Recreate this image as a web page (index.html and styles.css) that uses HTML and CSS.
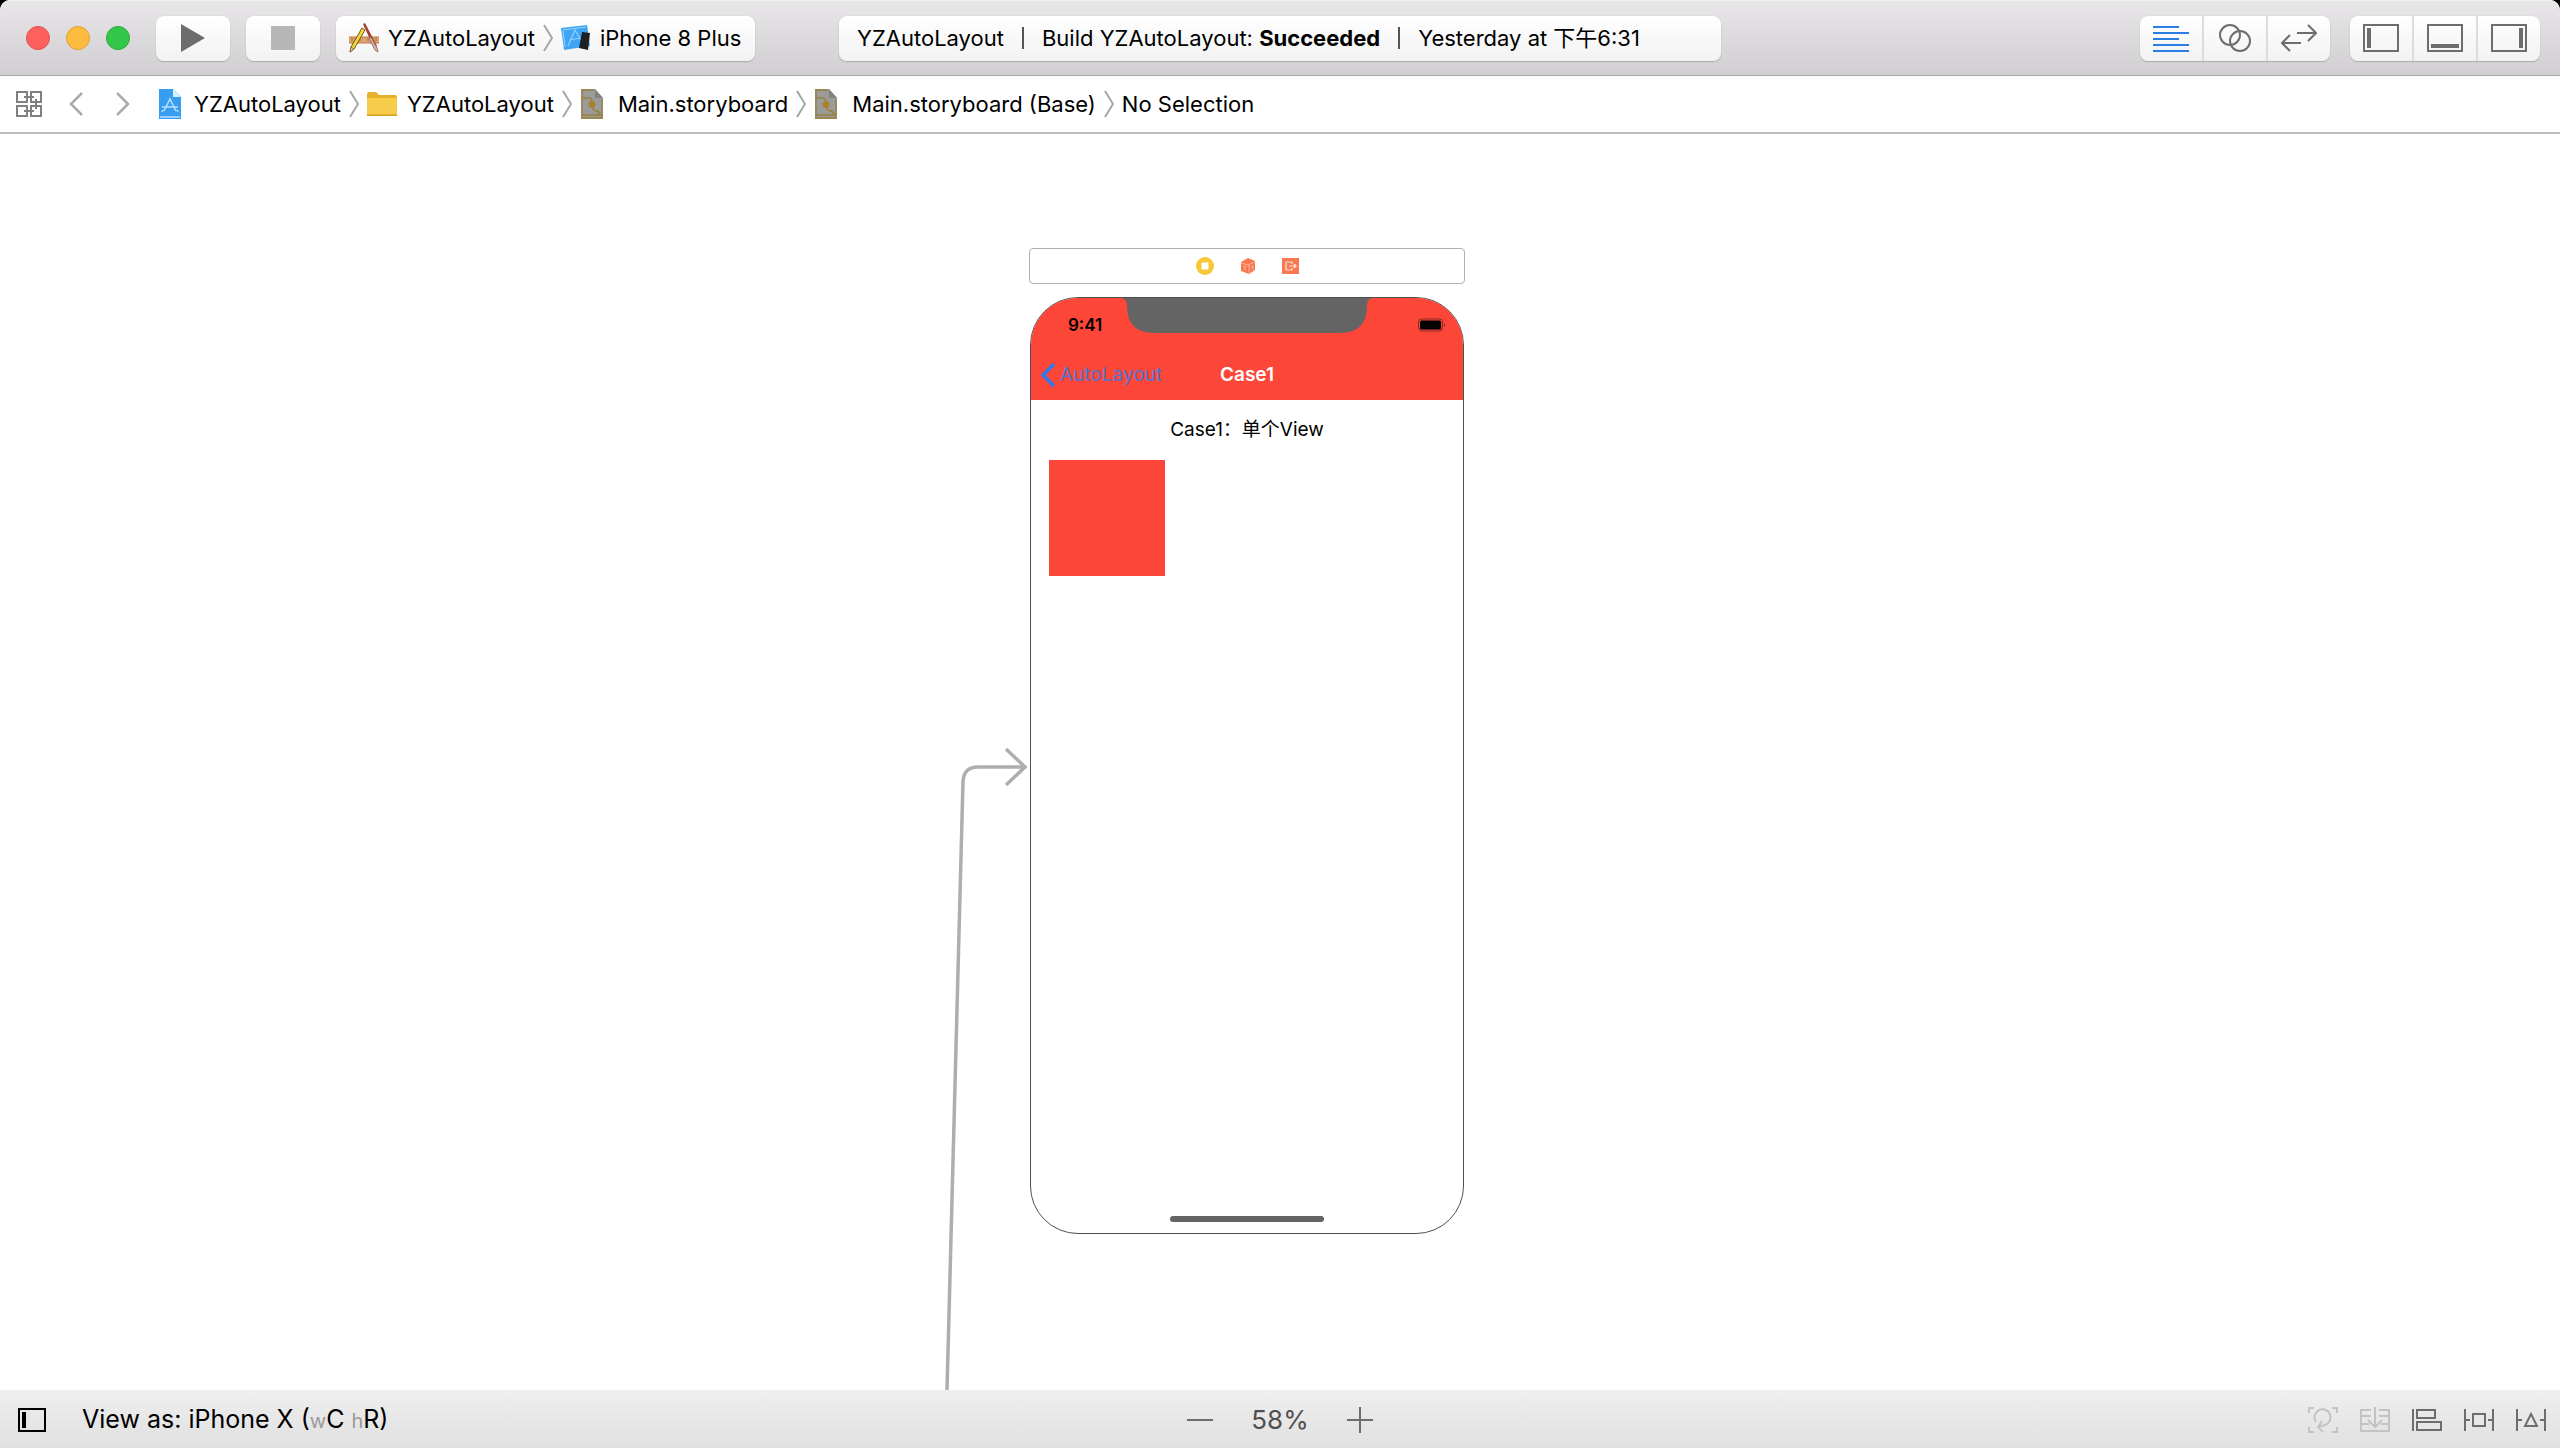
FILE: index.html
```html
<!DOCTYPE html>
<html lang="en">
<head>
  <meta charset="UTF-8">
  <meta name="viewport" content="width=device-width, initial-scale=1.0">
  <title>YZAutoLayout</title>
  <link rel="stylesheet" href="styles.css">
</head>
<body>
  <svg class="defs" width="0" height="0" aria-hidden="true">
    <symbol id="separator" viewBox="0 0 10 28">
      <path d="M1 1l8 13-8 13" fill="none" stroke="#a6a6a6" stroke-width="2"/>
    </symbol>
    <symbol id="storyboard" viewBox="0 0 24 32">
      <path d="M1 1h14l8 9v21H1z" fill="#9b9b99"/>
      <path d="M15 1v9h8z" fill="#82827f"/>
      <path d="M14 2H2v28h20V11M2 27h20M3 10h6q3 0 3 4v3q0 5 4 6l4 2m-3-3l3 3-3 2" fill="none" stroke="#98803f" stroke-width="1.3"/>
      <circle cx="12" cy="16.500" r="3.500" fill="#a8822c"/>
    </symbol>
  </svg>

  <div class="window">
    <!-- Toolbar -->
    <header class="toolbar">
      <div class="toolbar-left">
        <div class="lights">
          <button class="light close" aria-label="Close"></button>
          <button class="light minimize" aria-label="Minimize"></button>
          <button class="light zoom" aria-label="Zoom"></button>
        </div>
        <button class="tool" aria-label="Run">
          <svg width="24" height="28" viewBox="0 0 24 28"><path d="M0 0l24 14L0 28z" fill="#6d6d6d"/></svg>
        </button>
        <button class="tool" aria-label="Stop">
          <svg width="24" height="24" viewBox="0 0 24 24"><path d="M0 0h24v24H0z" fill="#b7b7b7"/></svg>
        </button>
        <div class="scheme">
          <button class="item">
            <svg width="30" height="30" viewBox="0 0 30 30">
              <path d="M0 14h30v6H0z" fill="#dda36f"/>
              <path d="M0 14h30M0 20h30" stroke="#c07b46"/>
              <path d="M3 15v3M7 15v2M11 15v3M19 15v3M23 15v2M27 15v3" stroke="#a9683a"/>
              <path d="M14 1l2-1 12 23-3 2z" fill="#a5402a"/>
              <path d="M20 15l2-1 6 11 1 4-3-2z" fill="#d9b9b2" stroke="#8e5a50" stroke-width=".8"/>
              <path d="M13 5l3 2L5 26l-4 3 1-5z" fill="#f5d63d" stroke="#6d5a1c"/>
              <path d="M2 24l3 2-4 3z" fill="#e9c9a0" stroke="#5f4b2a" stroke-width=".6"/>
            </svg>
            <span>YZAutoLayout</span>
          </button>
          <svg class="separator" width="10" height="28"><use href="#separator"/></svg>
          <button class="item">
            <svg width="30" height="26" viewBox="0 0 30 26">
              <path d="M0 3L26 0l3 21L3 25z" fill="#3ea4f3"/>
              <path d="M2 5l23-3M4 22L2 6M7 21l7-16 7 12M8 15l12-2" fill="none" stroke="#8fd0ff" stroke-width="1.200"/>
              <path d="M21 7l8 1-2 17-9-2z" fill="#1d1f24"/>
            </svg>
            <span>iPhone 8 Plus</span>
          </button>
        </div>
      </div>

      <div class="activity">
        <span>YZAutoLayout</span>
        <i class="rule"></i>
        <span>Build YZAutoLayout: <b>Succeeded</b></span>
        <i class="rule"></i>
        <span>Yesterday at 下午6:31</span>
      </div>

      <div class="toolbar-right">
        <div class="segments">
          <button aria-label="Standard editor">
            <svg width="36" height="28" viewBox="0 0 36 28"><path d="M0 3h26M0 9h36M0 15h26M0 21h36M0 27h36" stroke="#2a7de1" stroke-width="2"/></svg>
          </button>
          <button aria-label="Assistant editor">
            <svg width="32" height="28" viewBox="0 0 32 28" fill="none" stroke="#6d6d6d" stroke-width="2"><circle cx="11" cy="11" r="10"/><circle cx="21" cy="17" r="10"/></svg>
          </button>
          <button aria-label="Version editor">
            <svg width="36" height="28" viewBox="0 0 36 28" fill="none" stroke="#6d6d6d" stroke-width="2"><path d="M16 9h19M27 1l8 8-8 8M20 19H1M9 11l-8 8 8 8"/></svg>
          </button>
        </div>
        <div class="segments">
          <button aria-label="Navigator">
            <svg width="36" height="28" viewBox="0 0 36 28"><path d="M1 1h34v26H1z" fill="none" stroke="#6d6d6d" stroke-width="2"/><path d="M4 4h4v20H4z" fill="#6d6d6d"/></svg>
          </button>
          <button aria-label="Debug area">
            <svg width="36" height="28" viewBox="0 0 36 28"><path d="M1 1h34v26H1z" fill="none" stroke="#6d6d6d" stroke-width="2"/><path d="M4 20h28v4H4z" fill="#6d6d6d"/></svg>
          </button>
          <button aria-label="Inspectors">
            <svg width="36" height="28" viewBox="0 0 36 28"><path d="M1 1h34v26H1z" fill="none" stroke="#6d6d6d" stroke-width="2"/><path d="M28 4h4v20h-4z" fill="#6d6d6d"/></svg>
          </button>
        </div>
      </div>
    </header>

    <!-- Jump bar -->
    <nav class="jumpbar">
      <div class="history">
        <button aria-label="Related items">
          <svg width="26" height="26" viewBox="0 0 26 26" fill="none" stroke="#808080" stroke-width="2"><path d="M1 1h10v10H1zM15 1h10v10H15zM1 15h10v10H1zM15 15h10v10H15zM8 6h10M20 8v10M18 20H8"/></svg>
        </button>
        <button aria-label="Back">
          <svg width="14" height="24" viewBox="0 0 14 24"><path d="M13 1L2 12l11 11" fill="none" stroke="#ababab" stroke-width="2.500"/></svg>
        </button>
        <button class="forward" aria-label="Forward">
          <svg width="14" height="24" viewBox="0 0 14 24"><path d="M1 1l11 11L1 23" fill="none" stroke="#ababab" stroke-width="2.500"/></svg>
        </button>
      </div>
      <div class="path">
        <button class="item file">
          <svg width="24" height="32" viewBox="0 0 24 32">
            <path d="M1 1h14l8 8v22H1z" fill="#389df0"/>
            <path d="M15 1v8h8z" fill="#d8efff"/>
            <path d="M2 29h20M6 23l6-12 6 12M4 19h16M5 22l-1 2M19 22l1 2" fill="none" stroke="#b7e0ff" stroke-width="1.500"/>
          </svg>
          <span>YZAutoLayout</span>
        </button>
        <svg class="separator" width="10" height="28"><use href="#separator"/></svg>
        <button class="item">
          <svg width="30" height="26" viewBox="0 0 30 26">
            <path d="M0 3q0-2 2-2h7l3 3h16q2 0 2 2v18H0z" fill="#e6b22c"/>
            <path d="M0 7h30v16H0z" fill="#f8cc4b"/>
            <path d="M0 24.500h30" stroke="#d5a125"/>
          </svg>
          <span>YZAutoLayout</span>
        </button>
        <svg class="separator" width="10" height="28"><use href="#separator"/></svg>
        <button class="item storyboard">
          <svg width="24" height="32"><use href="#storyboard"/></svg>
          <span>Main.storyboard</span>
        </button>
        <svg class="separator" width="10" height="28"><use href="#separator"/></svg>
        <button class="item storyboard">
          <svg width="24" height="32"><use href="#storyboard"/></svg>
          <span>Main.storyboard (Base)</span>
        </button>
        <svg class="separator" width="10" height="28"><use href="#separator"/></svg>
        <button class="item"><span>No Selection</span></button>
      </div>
    </nav>

    <!-- Storyboard canvas -->
    <main class="canvas">
      <svg class="segue" width="90" height="646" viewBox="0 0 90 646" fill="none" stroke="#aeaeae" stroke-width="3.500">
        <path d="M7 646L23 37Q24 23 38 23H85M66 5l19 18-19 18"/>
      </svg>

      <div class="scene">
        <div class="dock">
          <svg width="18" height="18" viewBox="0 0 18 18"><circle cx="9" cy="9" r="9" fill="#f8c736"/><rect x="5.500" y="5.500" width="7" height="7" rx="1" fill="#fff"/></svg>
          <svg width="18" height="18" viewBox="0 0 18 18">
            <path d="M9 1l7 3v9l-6 4-8-3V5z" fill="#f97850"/>
            <path d="M2 6l7 2 7-3M10 8v8M4 9l3 1-2 2 2 1M12 10l2-1v4" fill="none" stroke="#ffc0ab" stroke-width=".8"/>
          </svg>
          <svg width="18" height="18" viewBox="0 0 18 18"><path d="M0 1h17v16H0z" fill="#f97850"/><path d="M10 7V5H4v8h6v-2M7 9h7M12 7l2 2-2 2" fill="none" stroke="#ffe4da" stroke-width="1.200"/></svg>
        </div>

        <div class="phone">
          <div class="phone-head">
            <svg class="notch" width="250" height="35" viewBox="0 0 250 35"><path d="M0 0Q5 1 5 8q0 27 27 27h186q27 0 27-27 0-7 5-8z" fill="#646464"/></svg>
            <div class="statusbar">
              <span>9:41</span>
              <svg width="28" height="14" viewBox="0 0 28 14"><rect x=".5" y="1" width="24" height="12" rx="3" fill="none" stroke="#8c2820"/><rect x="2" y="2.500" width="21" height="9" rx="1.500" fill="#000"/><path d="M26 5q2 2 0 4z" fill="#8c2820"/></svg>
            </div>
            <div class="navbar">
              <button class="back">
                <svg width="15" height="24" viewBox="0 0 15 24"><path d="M13 1L2 12l11 11" fill="none" stroke="#2b7cf0" stroke-width="3.500"/></svg>
                <span>AutoLayout</span>
              </button>
              <span class="title">Case1</span>
            </div>
          </div>
          <div class="view">
            <p>Case1：单个View</p>
            <div class="box"></div>
          </div>
          <div class="home"></div>
        </div>
      </div>
    </main>

    <!-- Canvas bar -->
    <footer class="bottombar">
      <div class="bottom-left">
        <button aria-label="Document outline">
          <svg width="28" height="24" viewBox="0 0 28 24"><path d="M1 1h26v22H1z" fill="none" stroke="#000" stroke-width="2"/><path d="M4 4h4v16H4z"/></svg>
        </button>
        <button class="device">View as: iPhone X (<small>w</small>C <small>h</small>R)</button>
      </div>
      <div class="zoomer">
        <button aria-label="Zoom out">
          <svg width="26" height="26" viewBox="0 0 26 26"><path d="M0 13h26" stroke="#6d6d6d" stroke-width="2"/></svg>
        </button>
        <span>58%</span>
        <button aria-label="Zoom in">
          <svg width="26" height="26" viewBox="0 0 26 26"><path d="M0 13h26M13 0v26" stroke="#6d6d6d" stroke-width="2"/></svg>
        </button>
      </div>
      <div class="bottom-right">
        <button aria-label="Update frames" disabled>
          <svg width="30" height="26" viewBox="0 0 30 26" fill="none" stroke="#c3c3c3" stroke-width="2"><path d="M1 6V1h5M24 1h5v5M29 20v5h-5M6 25H1v-5M8 15a8 8 0 1 1 9 3l-7 2M15 25l-5-5 4-6"/></svg>
        </button>
        <button aria-label="Embed in stack" disabled>
          <svg width="30" height="26" viewBox="0 0 30 26" fill="none" stroke="#c3c3c3" stroke-width="2"><path d="M11 3H1v21h28V3H19M1 9h10M19 9h10M1 17h8M21 17h8M15 0v19M8 13l7 7 7-7"/></svg>
        </button>
        <button aria-label="Align">
          <svg width="30" height="26" viewBox="0 0 30 26" fill="none" stroke="#6d6d6d" stroke-width="2"><path d="M1 2v22M5 3h18v8H5zM5 15h24v8H5z"/></svg>
        </button>
        <button aria-label="Add constraints">
          <svg width="30" height="26" viewBox="0 0 30 26" fill="none" stroke="#6d6d6d" stroke-width="2"><path d="M1 2v22M29 2v22M1 13h5M24 13h5M9 7h12v12H9z"/></svg>
        </button>
        <button aria-label="Resolve issues">
          <svg width="30" height="26" viewBox="0 0 30 26" fill="none" stroke="#6d6d6d" stroke-width="2"><path d="M1 2v22M29 2v22M1 13h5M24 13h5M15 7l6 12H9z"/></svg>
        </button>
      </div>
    </footer>
  </div>
</body>
</html>
```
FILE: styles.css
```css
* {
  box-sizing: border-box;
}

html, body {
  margin: 0;
  height: 100%;
  background: #000;
}

body, button {
  font-family: Inter, "Noto Sans CJK SC", sans-serif;
  font-size: 22px;
  line-height: 28px;
  color: #000;
}

button {
  margin: 0;
  padding: 0;
  border: none;
  background: none;
}

svg {
  display: block;
  flex: none;
}

.defs {
  position: absolute;
}

.window {
  display: flex;
  flex-direction: column;
  min-height: 100%;
  background: #fff;
  border-radius: 10px 10px 0 0;
  overflow: hidden;
  white-space: nowrap;
}

/* toolbar */
.toolbar {
  display: grid;
  grid-template-columns: 1fr minmax(0, 882px) 1fr;
  align-items: center;
  height: 76px;
  padding: 0 20px;
  background: linear-gradient(#e8e6e8, #d0ced0);
  border-top: 1px solid #f5f4f5;
  border-bottom: 1px solid #a9a8a9;
}

.toolbar-left,
.toolbar-right,
.lights,
.scheme,
.item,
.history,
.path {
  display: flex;
  align-items: center;
}

.toolbar-left {
  gap: 16px;
}

.toolbar-right {
  justify-content: flex-end;
  gap: 20px;
}

.lights {
  gap: 16px;
  padding: 0 10px 0 6px;
}

.light {
  width: 24px;
  height: 24px;
  border-radius: 50%;
  border: 1px solid;
}

.close {
  background: #fc615d;
  border-color: #e0504c;
}

.minimize {
  background: #fdbc40;
  border-color: #dfa02f;
}

.zoom {
  background: #34c84a;
  border-color: #27aa35;
}

.tool,
.scheme,
.activity,
.segments {
  height: 45px;
  border-radius: 8px;
  background: linear-gradient(#fff, #f2f2f2);
  box-shadow: 0 0 1px 0 #b8b7b8, 0 1px 1px 0 #aaa9aa;
}

.tool {
  display: flex;
  align-items: center;
  justify-content: center;
  width: 74px;
}

.scheme {
  gap: 8px;
  padding: 0 14px 0 13px;
}

.item {
  gap: 9px;
}

.activity {
  display: flex;
  align-items: center;
  gap: 18px;
  padding: 0 18px;
}

.rule {
  width: 2px;
  height: 22px;
  background: #555;
}

.segments {
  display: flex;
  width: 190px;
}

.segments button {
  display: flex;
  align-items: center;
  justify-content: center;
  flex: 1;
}

.segments button + button {
  border-left: 2px solid #dcdcdc;
}

/* jump bar */
.jumpbar {
  display: flex;
  align-items: center;
  gap: 28px;
  height: 58px;
  padding: 0 16px;
  border-bottom: 2px solid #bcbcbc;
}

.history {
  gap: 27px;
}

.forward {
  margin-left: 6px;
}

.path {
  gap: 8px;
}

.path .item {
  gap: 10px;
}

.path .file {
  gap: 12px;
}

.path .storyboard {
  gap: 14px;
}

/* canvas */
.canvas {
  position: relative;
  flex: 1;
  min-height: 1160px;
}

.segue {
  position: absolute;
  top: 610px;
  left: calc(50% - 340px);
}

.scene {
  position: absolute;
  top: 114px;
  left: calc(50% - 251px);
  width: 436px;
}

.dock {
  display: flex;
  align-items: center;
  justify-content: center;
  gap: 25px;
  height: 36px;
  margin-bottom: 13px;
  padding-left: 2px;
  border: 1px solid #b0b0b0;
  border-radius: 4px;
}

.phone {
  display: flex;
  flex-direction: column;
  height: 937px;
  margin: 0 1px;
  border: 1px solid #505050;
  border-radius: 48px;
  overflow: hidden;
  font-size: 19px;
}

.phone-head {
  position: relative;
  background: #fc4638;
}

.notch {
  position: absolute;
  top: 0;
  left: 50%;
  margin-left: -125px;
}

.statusbar {
  display: flex;
  align-items: center;
  justify-content: space-between;
  height: 52px;
  padding: 2px 17px 0 37px;
  font-size: 17px;
  font-weight: 600;
}

.navbar {
  display: grid;
  grid-template-columns: 1fr auto 1fr;
  align-items: center;
  height: 50px;
  padding: 0 10px;
}

.back {
  display: flex;
  align-items: center;
  gap: 4px;
  font-size: 19px;
  color: #4f74d0;
}

.title {
  font-weight: 600;
  color: #fff;
}

.view {
  flex: 1;
  padding: 16px 18px;
}

.view p {
  margin: 0 0 16px;
  text-align: center;
}

.box {
  width: 116px;
  height: 116px;
  background: #fc4638;
}

.home {
  width: 154px;
  height: 6px;
  margin: 0 auto 11px;
  border-radius: 3px;
  background: #646464;
}

/* bottom bar */
.bottombar {
  display: grid;
  grid-template-columns: 1fr auto 1fr;
  align-items: center;
  height: 58px;
  padding: 2px 14px 0;
  background: linear-gradient(#efefef, #e0e0e0);
}

.bottom-left,
.bottom-right,
.zoomer {
  display: flex;
  align-items: center;
}

.bottom-left {
  gap: 36px;
  padding-left: 4px;
}

.device {
  font-size: 25px;
}

.device small {
  font-size: 20px;
  color: #9a9a9a;
}

.zoomer {
  gap: 38px;
  font-size: 26px;
  color: #505050;
}

.bottom-right {
  justify-content: flex-end;
  gap: 22px;
}
```
